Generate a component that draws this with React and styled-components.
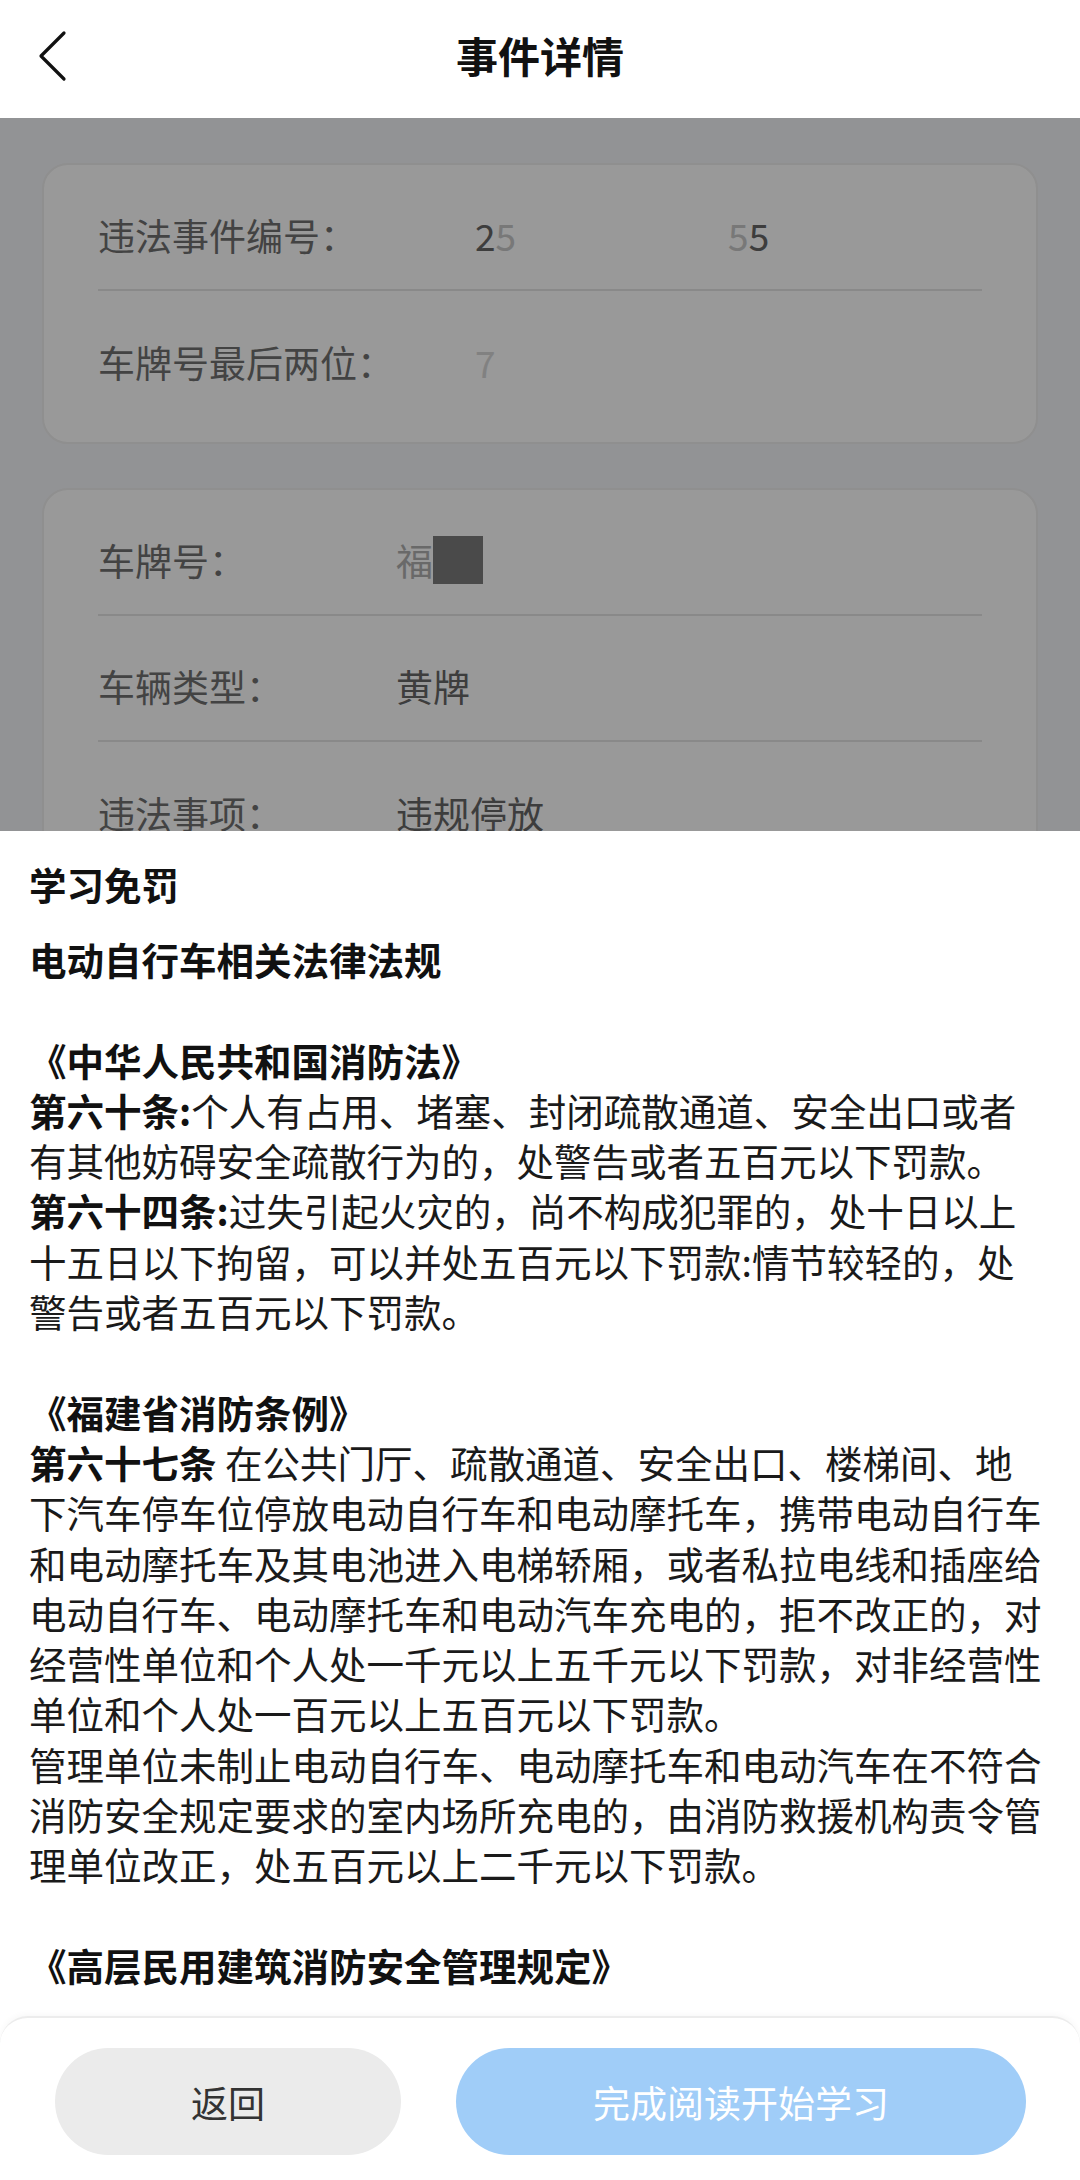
import React from 'react';
import styled, { createGlobalStyle } from 'styled-components';

const GlobalStyle = createGlobalStyle`
  * { box-sizing: border-box; }
  body {
    margin: 0;
    font-family: "Noto Sans CJK SC", "Noto Sans", sans-serif;
    background: #ffffff;
  }
`;

const Screen = styled.div`
  width: 1080px;
  height: 2180px;
  display: flex;
  flex-direction: column;
  overflow: hidden;
`;

const Header = styled.header`
  height: 118px;
  flex-shrink: 0;
  display: flex;
  align-items: center;
  justify-content: center;
  padding-bottom: 8px;
  position: relative;
  background: #ffffff;
`;

const BackBtn = styled.button`
  position: absolute;
  left: 30px;
  top: 26px;
  width: 44px;
  height: 60px;
  padding: 0;
  border: none;
  background: none;
  display: flex;
  align-items: center;
  justify-content: center;
`;

const Title = styled.h1`
  margin: 0;
  font-size: 42px;
  font-weight: 700;
  color: #111;
  line-height: 1;
`;

const Main = styled.main`
  flex: 1;
  position: relative;
  overflow: hidden;
  background: #f4f5f9;
`;

const Content = styled.div`
  padding: 45px 42px;
  display: flex;
  flex-direction: column;
  gap: 44px;
`;

const Card = styled.section`
  background: #ffffff;
  border: 2px solid #eeeeee;
  border-radius: 26px;
  padding: 0 54px 25px;
`;

const Row = styled.div`
  display: flex;
  align-items: center;
  height: 126px;
  padding: 36px 0 20px;
  border-bottom: ${p => (p.$last ? 'none' : '2px solid #e4e4e4')};
`;

const Label = styled.span`
  width: ${p => p.$w}px;
  flex-shrink: 0;
  font-size: 37px;
  color: #707070;
  line-height: 50px;
`;

const Value = styled.span`
  font-size: 37px;
  color: #666666;
  line-height: 50px;
  display: flex;
  align-items: center;
`;

const Faint = styled.span`
  color: ${p => p.$c || '#d8d8d8'};
`;

const Mask = styled.span`
  display: inline-block;
  width: ${p => p.$w}px;
  height: ${p => p.$h || 1}px;
  background: ${p => p.$bg || 'transparent'};
`;

const Overlay = styled.div`
  position: absolute;
  inset: 0;
  background: rgba(0, 0, 0, 0.4);
`;

const Sheet = styled.div`
  position: absolute;
  left: 0;
  right: 0;
  bottom: 0;
  height: 1349px;
  background: #ffffff;
  display: flex;
  flex-direction: column;
`;

const Scroll = styled.div`
  flex: 1;
  overflow: hidden;
  padding: 28px 29px 0;
  color: #1a1a1a;
`;

const SheetTitle = styled.div`
  font-size: 37.5px;
  font-weight: 700;
  line-height: 50px;
  color: #111;
  margin-bottom: 25px;
`;

const Line = styled.div`
  font-size: 37.5px;
  line-height: 50.3px;
  height: 50.3px;
  white-space: nowrap;
  font-weight: ${p => (p.$bold ? 700 : 400)};
  color: ${p => (p.$bold ? '#111' : '#1a1a1a')};
`;

const B = styled.b`
  font-weight: 700;
  color: #111;
`;

const Footer = styled.footer`
  flex-shrink: 0;
  height: 164px;
  padding: 30px 54px 27px 55px;
  display: flex;
  gap: 55px;
  background: #ffffff;
  border-top: 2px solid #ececec;
  border-radius: 28px 28px 0 0;
  box-shadow: 0 -2px 6px rgba(0, 0, 0, 0.03);
`;

const Pill = styled.button`
  flex: ${p => p.$grow};
  height: 107px;
  border: none;
  border-radius: 54px;
  font-family: inherit;
  font-size: 37px;
  background: ${p => (p.$primary ? '#a0cdf8' : '#ebebeb')};
  color: ${p => (p.$primary ? '#ffffff' : '#333333')};
`;

const lines = [
  { b: '电动自行车相关法律法规', bold: true },
  { blank: true },
  { b: '《中华人民共和国消防法》', bold: true },
  { b: '第六十条:', t: '个人有占用、堵塞、封闭疏散通道、安全出口或者' },
  { t: '有其他妨碍安全疏散行为的，处警告或者五百元以下罚款。' },
  { b: '第六十四条:', t: '过失引起火灾的，尚不构成犯罪的，处十日以上' },
  { t: '十五日以下拘留，可以并处五百元以下罚款:情节较轻的，处' },
  { t: '警告或者五百元以下罚款。' },
  { blank: true },
  { b: '《福建省消防条例》', bold: true },
  { b: '第六十七条', t: ' 在公共门厅、疏散通道、安全出口、楼梯间、地' },
  { t: '下汽车停车位停放电动自行车和电动摩托车，携带电动自行车' },
  { t: '和电动摩托车及其电池进入电梯轿厢，或者私拉电线和插座给' },
  { t: '电动自行车、电动摩托车和电动汽车充电的，拒不改正的，对' },
  { t: '经营性单位和个人处一千元以上五千元以下罚款，对非经营性' },
  { t: '单位和个人处一百元以上五百元以下罚款。' },
  { t: '管理单位未制止电动自行车、电动摩托车和电动汽车在不符合' },
  { t: '消防安全规定要求的室内场所充电的，由消防救援机构责令管' },
  { t: '理单位改正，处五百元以上二千元以下罚款。' },
  { blank: true },
  { b: '《高层民用建筑消防安全管理规定》', bold: true },
];

function ChevronLeft() {
  return (
    <svg width="30" height="52" viewBox="0 0 30 52" fill="none">
      <path d="M27 3 L4 26 L27 49" stroke="#111" strokeWidth="3.2" strokeLinecap="round" strokeLinejoin="round" />
    </svg>
  );
}

export default function App() {
  return (
    <Screen>
      <GlobalStyle />
      <Header>
        <BackBtn><ChevronLeft /></BackBtn>
        <Title>事件详情</Title>
      </Header>
      <Main>
        <Content>
          <Card>
            <Row>
              <Label $w={377}>违法事件编号：</Label>
              <Value>2<Faint $c="#c8c8c8">5</Faint><Mask $w={212} /><Faint $c="#c8c8c8">5</Faint>5</Value>
            </Row>
            <Row $last>
              <Label $w={377}>车牌号最后两位：</Label>
              <Value><Faint>7</Faint></Value>
            </Row>
          </Card>
          <Card>
            <Row>
              <Label $w={298}>车牌号：</Label>
              <Value>
                <Faint $c="#b0b0b0">福</Faint>
                <Mask $w={50} $h={48} $bg="#7c7c7c" />
              </Value>
            </Row>
            <Row>
              <Label $w={298}>车辆类型：</Label>
              <Value>黄牌</Value>
            </Row>
            <Row $last>
              <Label $w={298}>违法事项：</Label>
              <Value>违规停放</Value>
            </Row>
          </Card>
        </Content>
        <Overlay />
        <Sheet>
          <Scroll>
            <SheetTitle>学习免罚</SheetTitle>
            {lines.map((l, i) =>
              l.blank ? (
                <Line key={i} />
              ) : l.bold ? (
                <Line key={i} $bold>{l.b}</Line>
              ) : (
                <Line key={i}>
                  {l.b && <B>{l.b}</B>}
                  {l.t}
                </Line>
              )
            )}
          </Scroll>
          <Footer>
            <Pill $grow={343}>返回</Pill>
            <Pill $grow={573} $primary>完成阅读开始学习</Pill>
          </Footer>
        </Sheet>
      </Main>
    </Screen>
  );
}
